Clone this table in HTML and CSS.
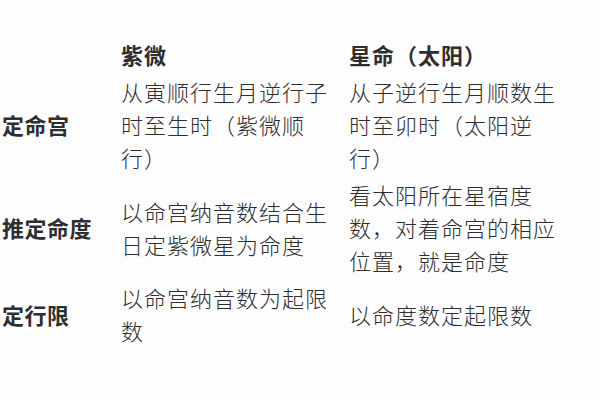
FILE: index.html
```html
<!DOCTYPE html>
<html lang="zh-CN">
<head>
<meta charset="utf-8">
<link rel="stylesheet" href="styles.css">
</head>
<body>
<div class="table">
  <div class="cell label"></div>
  <div class="cell head">紫微</div>
  <div class="cell head">星命（太阳）</div>

  <div class="cell label">定命宫</div>
  <div class="cell">从寅顺行生月逆行子时至生时（紫微顺行）</div>
  <div class="cell">从子逆行生月顺数生时至卯时（太阳逆行）</div>

  <div class="cell label">推定命度</div>
  <div class="cell">以命宫纳音数结合生日定紫微星为命度</div>
  <div class="cell">看太阳所在星宿度数，对着命宫的相应位置，就是命度</div>

  <div class="cell label">定行限</div>
  <div class="cell">以命宫纳音数为起限数</div>
  <div class="cell">以命度数定起限数</div>
</div>
</body>
</html>
```
FILE: styles.css
```css
html, body {
  margin: 0;
  padding: 0;
  background: #fdfdfd;
}
body {
  width: 600px;
  height: 400px;
  overflow: hidden;
  font-family: "Noto Sans CJK SC", "Noto Sans", sans-serif;
  color: #2e2e2e;
}
.table {
  display: grid;
  grid-template-columns: 121px 228px 1fr;
  row-gap: 4px;
  padding-top: 38px;
}
.cell {
  font-size: 22px;
  letter-spacing: 1px;
  line-height: 33px;
  align-self: center;
  max-width: 216px;
  font-weight: 300;
}
.label {
  padding-left: 2px;
  font-weight: 700;
  letter-spacing: 0.5px;
}
.head {
  font-weight: 700;
}
```
